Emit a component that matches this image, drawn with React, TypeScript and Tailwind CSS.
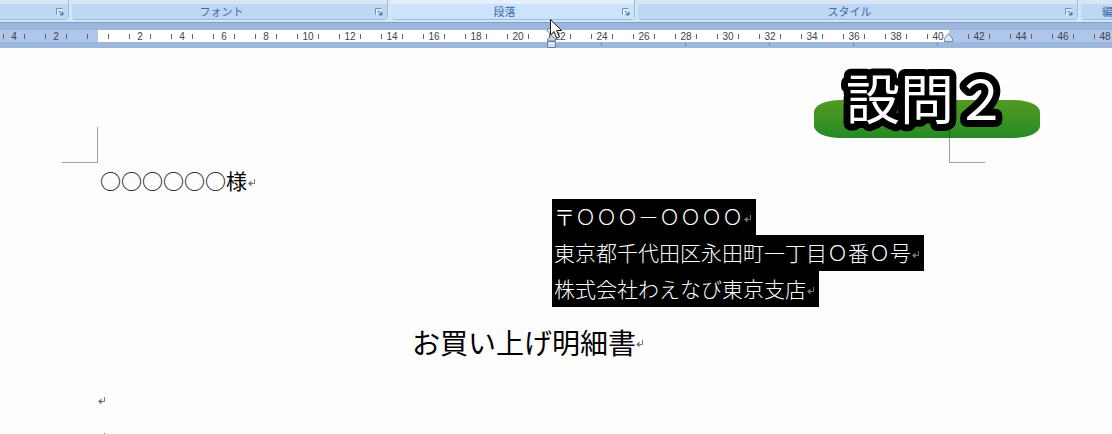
import React from 'react';

interface RibbonGroup {
  label: string;
  className: string;
  active?: boolean;
}

const ribbonGroups: RibbonGroup[] = [
  { label: '', className: 'w-[69px] rounded-br' },
  { label: 'フォント', className: 'w-[316px] rounded-b' },
  { label: '段落', className: 'w-[244px] rounded-b', active: true },
  { label: 'スタイル', className: 'w-[440px] rounded-b' },
];

const bodyMarks = Array.from({ length: 20 }, (_, i) => (i + 1) * 2);

const address = [
  '〒ＯＯＯ－ＯＯＯＯ',
  '東京都千代田区永田町一丁目Ｏ番Ｏ号',
  '株式会社わえなび東京支店',
];

const LauncherIcon: React.FC = () => (
  <svg width="8" height="8" viewBox="0 0 8 8" fill="none">
    <path d="M1.5 7.5V1.5H7" stroke="#f4f9ff" strokeOpacity="0.8" />
    <path d="M0.5 6.5V0.5H6.5" stroke="#6f8fb5" />
    <path d="M3 3L6 6" stroke="#5c7ea8" />
    <path d="M4 7H7V4Z" fill="#5c7ea8" stroke="#5c7ea8" />
  </svg>
);

const ParagraphMark: React.FC = () => (
  <svg className="mt-1 shrink-0" width="8" height="9" viewBox="0 0 8 9" fill="none">
    <path d="M6.5 1V5.5H2" stroke="#777777" />
    <path d="M0 5.5L3.5 2.5V8.5Z" fill="#777777" />
  </svg>
);

const Tick: React.FC = () => <span className="h-[5px] w-px shrink-0 bg-[#5a6478]" />;

const RulerCell: React.FC<{ value: number }> = ({ value }) => (
  <span className="flex w-[42px] shrink-0 items-center justify-between px-[10px]">
    <Tick />
    <span>{value}</span>
    <Tick />
  </span>
);

const Ribbon: React.FC = () => (
  <div className="flex h-[22px] gap-[3px] overflow-hidden bg-[#d3e6f8] pb-[2px]">
    {ribbonGroups.map((group, index) => (
      <section
        key={index}
        className={`flex shrink-0 flex-col border-r border-b border-[#9dbce0] ${group.className} ${
          group.active ? 'bg-[#d9eafc]' : 'bg-[#c7dcf3]'
        }`}
      >
        <div className="h-1 shrink-0 bg-white/30"></div>
        <div
          className={`flex flex-1 items-center pt-px pr-1 ${group.active ? 'bg-[#cde3fb]' : 'bg-[#bfd7f0]'}`}
        >
          <h2 className="flex-1 pr-1 text-center text-[11px] leading-none text-[#3e6aaa]">{group.label}</h2>
          <button aria-label={group.label || undefined} className="h-2 w-2">
            <LauncherIcon />
          </button>
        </div>
      </section>
    ))}
    <section className="flex min-w-0 flex-1 flex-col overflow-hidden rounded-bl border-b border-[#9dbce0] bg-[#c7dcf3]">
      <div className="h-1 shrink-0 bg-white/30"></div>
      <div className="flex flex-1 items-center bg-[#bfd7f0] pt-px pl-[21px]">
        <h2 className="text-[11px] leading-none whitespace-nowrap text-[#3e6aaa]">編集</h2>
      </div>
    </section>
  </div>
);

const Ruler: React.FC = () => (
  <div className="border-t border-[#7f9fc4] bg-[#9db7dc] pt-[7px]">
    <div className="flex h-3 overflow-hidden text-[10px] leading-none text-[#3c4250]">
      <div className="flex w-[98px] shrink-0 items-center justify-end overflow-hidden bg-[#b1c7ea] pt-px">
        <RulerCell value={4} />
        <RulerCell value={2} />
        <span className="flex w-[21px] shrink-0 pl-[10px]">
          <Tick />
        </span>
      </div>
      <div className="flex w-[851px] shrink-0 items-center overflow-hidden bg-white pt-px">
        <span className="flex w-[21px] shrink-0 justify-end pr-[10px]">
          <Tick />
        </span>
        {bodyMarks.map((value) => (
          <RulerCell key={value} value={value} />
        ))}
      </div>
      <div className="flex flex-1 items-center overflow-hidden bg-[#b1c7ea] pt-px pl-[9px]">
        {[42, 44, 46, 48].map((value) => (
          <RulerCell key={value} value={value} />
        ))}
      </div>
    </div>
    <div className="flex h-[6px] items-start gap-[83px] bg-[#9db7dc] pt-px pl-[601px]">
      {[24, 28, 32, 36, 40].map((value) => (
        <span key={value} className="h-[3px] w-px shrink-0 bg-[#6b83a8]" />
      ))}
    </div>
  </div>
);

const Banner: React.FC = () => (
  <div className="absolute top-[60px] left-[814px] flex w-[226px] justify-center">
    <div className="absolute inset-x-0 top-10 h-[38px] rounded-[26px/12px] bg-linear-to-b from-[#529a22] to-[#238a24]"></div>
    <svg className="relative overflow-visible" width="226" height="92" viewBox="0 0 226 92">
      <path d="M135.5 67V78" stroke="#1f6b20" />
      <text
        x="32"
        y="60"
        fontSize="54"
        fontWeight="400"
        fontFamily="'Noto Sans CJK JP', sans-serif"
        fill="#ffffff"
        stroke="#000000"
        strokeWidth="14"
        strokeLinejoin="round"
        paintOrder="stroke"
      >
        設問２
      </text>
    </svg>
  </div>
);

export default function App() {
  return (
    <div className="relative h-screen overflow-hidden bg-[#fdfdfd] font-['Liberation_Sans','Noto_Sans_CJK_JP',sans-serif]">
      <header>
        <Ribbon />
        <Ruler />
      </header>

      <main className="pt-[79px] font-['Noto_Sans_CJK_JP',sans-serif] text-[21px] font-light text-black">
        <div className="flex pl-[62px]">
          <div className="h-9 w-9 border-r border-b border-[#a0a0a0]"></div>
          <div className="w-[851px]"></div>
          <div className="h-9 w-9 border-b border-l border-[#a0a0a0]"></div>
        </div>

        <p className="flex h-9 items-center pb-[2px] pl-[100px] leading-8 font-normal">
          <span className="pr-px">○○○○○○様</span>
          <ParagraphMark />
        </p>

        <div className="flex flex-col items-start pl-[552px] text-white">
          {address.map((line) => (
            <p key={line} className="flex h-9 items-center bg-black pr-1 pb-[2px] pl-[2px] leading-8 whitespace-nowrap">
              <span className="pr-px">{line}</span>
              <ParagraphMark />
            </p>
          ))}
        </div>

        <h1 className="flex h-[75px] items-center pb-[6px] pl-[412px] text-[28px] leading-10 font-normal">
          お買い上げ明細書
          <ParagraphMark />
        </h1>

        <p className="flex h-9 items-center pb-1 pl-[98px]">
          <ParagraphMark />
        </p>
        <p className="flex h-9 items-center pb-1 pl-[98px]">
          <ParagraphMark />
        </p>
      </main>

      <Banner />

      <svg className="absolute top-[28px] left-[546px]" width="11" height="20" viewBox="0 0 11 20">
        <path d="M1.5 0.5H9.5V3L5.5 7L1.5 3Z" fill="#e4ebf5" stroke="#6c7f9c" />
        <path d="M1.5 13V11L5.5 7.5L9.5 11V13Z" fill="#c3d2e8" stroke="#6c7f9c" />
        <path d="M1.5 13.5H9.5V19.5H1.5Z" fill="#c9dcf2" stroke="#6c7f9c" />
        <path d="M3 15.5H8" stroke="#ffffff" />
      </svg>
      <svg className="absolute top-[32px] left-[943px]" width="11" height="11" viewBox="0 0 11 11">
        <path d="M1.5 9.5V6.5L5.5 1.5L9.5 6.5V9.5Z" fill="#dfe6f1" stroke="#7387a5" />
      </svg>
      <svg className="absolute top-[18px] left-[549px]" width="14" height="22" viewBox="0 0 14 22">
        <path d="M1.5 1.5V17L5 13.5L7.5 20L10.5 19L7.5 12.5H12.5Z" fill="#ffffff" stroke="#1a1a1a" />
      </svg>
    </div>
  );
}
